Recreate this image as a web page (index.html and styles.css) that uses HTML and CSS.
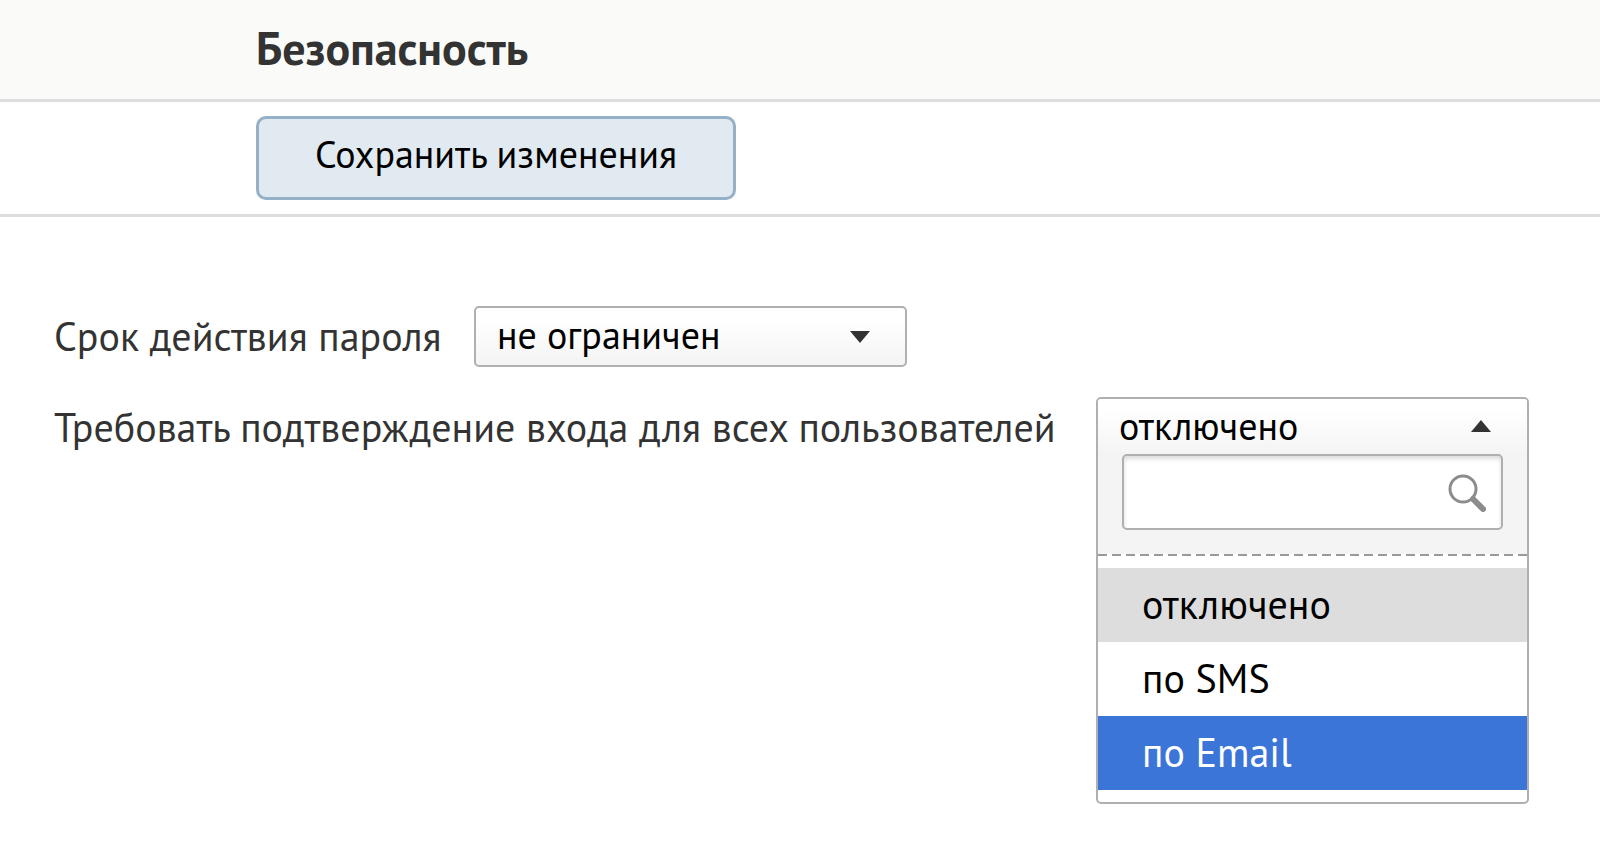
FILE: index.html
```
<!DOCTYPE html>
<html lang="ru">
<head>
  <meta charset="UTF-8">
  <meta name="viewport" content="width=device-width, initial-scale=1.0">
  <title>Безопасность</title>
  <link rel="stylesheet" href="styles.css">
</head>
<body>
  <header class="page-header">
    <h1>Безопасность</h1>
  </header>

  <form class="settings">
    <div class="toolbar">
      <button type="submit" class="save-button">Сохранить изменения</button>
    </div>

    <div class="fields">
      <div class="field">
        <label class="label-short" for="password-term">Срок действия пароля</label>
        <div class="select">
          <select id="password-term">
            <option selected>не ограничен</option>
          </select>
          <svg class="arrow" viewBox="0 0 20 12" aria-hidden="true"><path d="M0 0h20L10 12z"/></svg>
        </div>
      </div>

      <div class="field">
        <label class="label-long" for="login-confirm">Требовать подтверждение входа для всех пользователей</label>
        <div class="dropdown">
          <button type="button" id="login-confirm" class="dropdown-toggle" aria-haspopup="listbox" aria-expanded="true">
            <span>отключено</span>
            <svg class="arrow" viewBox="0 0 20 12" aria-hidden="true"><path d="M0 12h20L10 0z"/></svg>
          </button>
          <div class="dropdown-search">
            <input type="text" aria-label="Поиск">
            <svg class="search-icon" viewBox="0 0 38 38" aria-hidden="true">
              <circle cx="15" cy="15" r="13"/>
              <path d="M25 25l10 10"/>
            </svg>
          </div>
          <ul class="dropdown-list" role="listbox">
            <li class="selected" role="option" aria-selected="true">отключено</li>
            <li role="option">по SMS</li>
            <li class="highlighted" role="option">по Email</li>
          </ul>
        </div>
      </div>
    </div>
  </form>
</body>
</html>
```
FILE: styles.css
```
* {
  box-sizing: border-box;
}
body {
  margin: 0;
  font-family: "PT Sans", "Noto Sans", sans-serif;
  font-size: 40px;
  line-height: 48px;
  color: #333;
  background-color: #fff;
}
button,
input,
select {
  font: inherit;
  font-size: 38px;
  color: #000;
}
.page-header {
  padding: 24px 256px 27px;
  background-color: #fafaf8;
  border-bottom: 3px solid #ddd;
}
.page-header h1 {
  margin: 0;
  font-size: 46px;
  line-height: 48px;
}
.toolbar {
  padding: 14px 256px;
  border-bottom: 3px solid #ddd;
}
.save-button {
  display: block;
  width: 480px;
  height: 84px;
  padding: 0 0 8px;
  background-color: #e1e9f1;
  border: 3px solid #94b1c8;
  border-radius: 10px;
}
.fields {
  display: flex;
  flex-direction: column;
  gap: 30px;
  padding: 89px 54px 0;
}
.field {
  display: flex;
  align-items: flex-start;
  gap: 30px;
}
.field label {
  padding: 6px 0;
  white-space: nowrap;
}
.label-short {
  min-width: 390px;
}
.label-long {
  min-width: 1012px;
}
.select {
  position: relative;
  width: 433px;
}
.select select {
  display: block;
  appearance: none;
  width: 100%;
  height: 61px;
  padding: 0 60px 4px 21px;
  background: linear-gradient(#fff 20%, #f4f4f4);
  border: 2px solid #b0b0b0;
  border-radius: 5px;
}
.arrow {
  width: 20px;
  height: 12px;
  fill: #333;
}
.select .arrow {
  position: absolute;
  top: 25px;
  right: 37px;
  pointer-events: none;
}
.dropdown {
  flex: none;
  width: 433px;
  border: 2px solid #b0b0b0;
  border-radius: 5px;
  overflow: hidden;
}
.dropdown-toggle {
  display: flex;
  align-items: center;
  justify-content: space-between;
  width: 100%;
  height: 55px;
  padding: 0 36px 2px 21px;
  background: linear-gradient(#fff 20%, #f4f4f4);
  border: 0;
}
.dropdown-search {
  position: relative;
  padding: 0 24px 26px;
  background: repeating-linear-gradient(90deg, #999 0 9px, #fff 9px 14px) bottom / 100% 2px no-repeat #f4f4f4;
}
.dropdown-search input {
  display: block;
  width: 100%;
  height: 76px;
  padding: 0 60px 0 16px;
  background-color: #fff;
  border: 2px solid #b0b0b0;
  border-radius: 5px;
  box-shadow: inset 0 3px 4px #ddd;
}
.search-icon {
  position: absolute;
  top: 20px;
  right: 41px;
  width: 38px;
  height: 38px;
  fill: none;
  stroke: #8c8c8c;
  stroke-width: 3;
}
.search-icon path {
  stroke-width: 6;
  stroke-linecap: round;
}
.dropdown-list {
  margin: 0;
  padding: 12px 0;
  list-style: none;
  color: #000;
}
.dropdown-list li {
  padding: 12px 44px 14px;
}
.dropdown-list .selected {
  background-color: #ddd;
}
.dropdown-list .highlighted {
  color: #fff;
  background-color: #3b75d8;
}
```
